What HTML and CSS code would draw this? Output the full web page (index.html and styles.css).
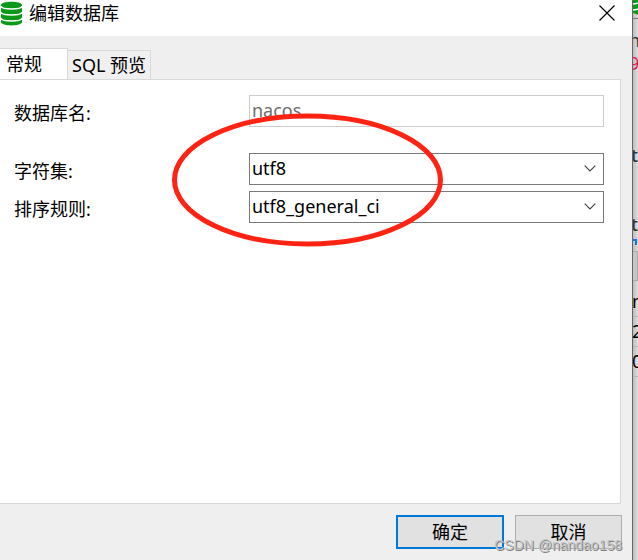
FILE: index.html
```html
<!DOCTYPE html>
<html lang="zh-CN">
<head>
<meta charset="utf-8">
<title>编辑数据库</title>
<link rel="stylesheet" href="styles.css">
</head>
<body>
<main class="dialog">
  <header class="titlebar">
    <svg class="db-icon" viewBox="0 0 21 25" aria-hidden="true">
      <path d="M0 4C0-.5 21-.5 21 4V21C21 25.500 0 25.500 0 21Z" fill="#0b9a17"/>
      <path d="M-.5 5C1 9 20 9 21.500 5M-.5 11C1 15 20 15 21.500 11M-.5 17C1 21 20 21 21.500 17" fill="none" stroke="#fff" stroke-width="1.500"/>
    </svg>
    <h1 class="title">编辑数据库</h1>
    <button class="close" type="button" aria-label="关闭">
      <svg viewBox="0 0 16 16" aria-hidden="true"><path d="M.5 .5 15.500 15.500M15.500 .5 .5 15.500" fill="none" stroke="#000" stroke-width="1.200"/></svg>
    </button>
  </header>
  <nav class="tabs" role="tablist">
    <button class="tab tab-active" type="button" role="tab" aria-selected="true">常规</button>
    <button class="tab" type="button" role="tab" aria-selected="false">SQL 预览</button>
  </nav>
  <form class="form" id="db-form">
    <div class="row row-name">
      <label for="name">数据库名:</label>
      <input class="field" id="name" type="text" value="nacos" disabled>
    </div>
    <div class="row">
      <label for="charset">字符集:</label>
      <div class="combo">
        <select class="field" id="charset"><option>utf8</option></select>
        <svg class="chevron" viewBox="0 0 12 7" aria-hidden="true"><path d="M.7 .7 6 6 11.300 .7" fill="none" stroke="#444" stroke-width="1.200"/></svg>
      </div>
    </div>
    <div class="row">
      <label for="collation">排序规则:</label>
      <div class="combo">
        <select class="field" id="collation"><option>utf8_general_ci</option></select>
        <svg class="chevron" viewBox="0 0 12 7" aria-hidden="true"><path d="M.7 .7 6 6 11.300 .7" fill="none" stroke="#444" stroke-width="1.200"/></svg>
      </div>
    </div>
    <svg class="marker" viewBox="0 0 271 134" aria-hidden="true"><ellipse cx="135.500" cy="67" rx="133" ry="64" fill="none" stroke="#ff2313" stroke-width="5"/></svg>
  </form>
  <footer class="actions">
    <button class="action action-default" type="submit" form="db-form">确定</button>
    <button class="action" type="button">取消</button>
    <span class="watermark">CSDN @nandao158</span>
  </footer>
</main>
<aside class="behind" aria-hidden="true">
  <div class="behind-bar">
    <svg viewBox="0 0 6 16"><path d="M0 0H6V15L0 13Z" fill="#0b9a17"/><path d="M0 4 6 3M0 10 6 9" stroke="#fff" stroke-width="1.500"/></svg>
  </div>
  <div class="behind-code">
    <span class="line">n</span>
    <span class="line red">9</span>
    <span class="line gap">t</span>
    <span class="line gap-next">t</span>
    <svg class="quote" viewBox="0 0 5 6"><path d="M0 1H3V6" fill="none" stroke="#1677e0" stroke-width="2"/></svg>
  </div>
  <div class="behind-button"></div>
  <div class="behind-grid">
    <span class="cell">m</span>
    <span class="cell">2</span>
    <span class="cell">0</span>
  </div>
</aside>
</body>
</html>
```

FILE: styles.css
```css
* {
  box-sizing: border-box;
}

body {
  margin: 0;
  min-height: 100vh;
  display: flex;
  overflow: hidden;
  background: #dcdcdc;
  color: #000;
  font: 18px/24px "Noto Sans", "Noto Sans CJK SC", sans-serif;
}

button,
input,
select {
  font: inherit;
  color: inherit;
  margin: 0;
}

.dialog {
  flex: 1;
  min-width: 0;
  display: flex;
  flex-direction: column;
  background: #efefef;
}

.titlebar {
  height: 36px;
  display: flex;
  align-items: center;
  padding: 0 17px 10px 1px;
  background: #fff;
}

.db-icon {
  width: 21px;
  height: 25px;
  margin-right: 7px;
}

.title {
  flex: 1;
  margin: 0;
  font-size: 18px;
  font-weight: 400;
}

.close {
  display: flex;
  padding: 0;
  border: 0;
  background: none;
}

.close svg {
  width: 16px;
  height: 16px;
}

.tabs {
  display: flex;
  align-items: flex-end;
  padding-top: 12px;
}

.tab {
  height: 29px;
  padding: 0 4px;
  border: 1px solid #d9d9d9;
  border-width: 1px 1px 0 0;
  background: #f0f0f0;
}

.tab-active {
  height: 32px;
  width: 68px;
  margin-bottom: -1px;
  padding: 0 6px 2px;
  background: #fff;
  text-align: left;
  position: relative;
}

.form {
  flex: 1;
  position: relative;
  margin-right: 11px;
  padding: 15px 16px 15px 14px;
  border: 1px solid #d9d9d9;
  border-left: 0;
  background: #fff;
}

.row {
  display: grid;
  grid-template-columns: 235px 1fr;
  align-items: center;
  margin-bottom: 6px;
}

.row label {
  padding-top: 4px;
}

.row-name {
  margin-bottom: 26px;
}

.field {
  display: block;
  width: 100%;
  height: 32px;
  padding: 0 2px 2px;
  border: 1px solid #7a7a7a;
  border-radius: 0;
  background: #fff;
  appearance: none;
}

.field:disabled {
  border-color: #ccc;
  color: #6d6d6d;
}

.combo {
  position: relative;
}

.chevron {
  position: absolute;
  right: 8px;
  top: 12px;
  width: 12px;
  height: 7px;
  pointer-events: none;
}

.marker {
  position: absolute;
  left: 172px;
  top: 33px;
  width: 271px;
  height: 134px;
  pointer-events: none;
}

.actions {
  position: relative;
  display: flex;
  justify-content: flex-end;
  gap: 11px;
  padding: 11px 10px 11px 0;
}

.action {
  width: 107px;
  height: 34px;
  padding: 0;
  border: 1px solid #adadad;
  background: #e1e1e1;
}

.action-default {
  width: 108px;
  border: 2px solid #0078d7;
}

.watermark {
  position: absolute;
  right: 10px;
  bottom: 5px;
  font: 14px/20px "Liberation Sans", sans-serif;
  color: #c4c4c4;
  text-shadow: 1px 1px 0 #808080;
}

.behind {
  flex: 0 0 6px;
  overflow: hidden;
  border-left: 1px solid #666;
  background: linear-gradient(90deg, #bdbdbd, #dedede);
}

.behind-bar {
  height: 19px;
  border-bottom: 1px solid #777;
}

.behind-bar svg {
  display: block;
  width: 6px;
  height: 16px;
}

.behind-code {
  height: 232px;
  padding-top: 10px;
}

.line {
  display: block;
  margin-left: -4px;
  height: 23px;
  line-height: 22px;
  color: #333;
}

.red {
  color: #e8174b;
}

.gap {
  margin-top: 69px;
}

.gap-next {
  margin-top: 46px;
}

.gap,
.gap-next {
  margin-left: -2px;
  font-weight: 500;
}

.quote {
  display: block;
  width: 5px;
  height: 6px;
  margin-top: 3px;
}

.behind-button {
  height: 30px;
  border: 1px solid #aaa;
  border-left: 0;
  background: #c6c6c6;
}

.behind-grid {
  padding-top: 6px;
}

.cell {
  display: block;
  margin-left: -1px;
  height: 30px;
  line-height: 28px;
  border-bottom: 1px solid #b8b8b8;
}
```
